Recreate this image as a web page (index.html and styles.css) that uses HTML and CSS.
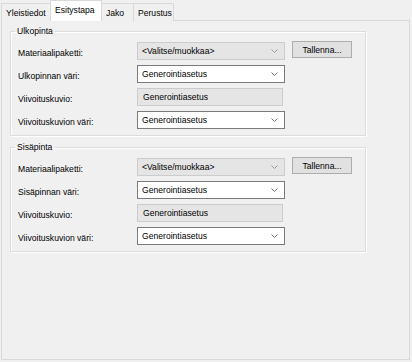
FILE: index.html
```html
<!DOCTYPE html>
<html>
<head>
<meta charset="utf-8">
<link rel="stylesheet" href="styles.css">
</head>
<body>
<div class="window">
  <div class="tabs">
    <div class="tab tab-yleis">Yleistiedot</div>
    <div class="tab tab-esitys selected">Esitystapa</div>
    <div class="tab tab-jako">Jako</div>
    <div class="tab tab-perus">Perustus</div>
  </div>
  <div class="panel">
    <fieldset class="group">
      <legend>Ulkopinta</legend>
      <div class="grid">
        <div class="label">Materiaalipaketti:</div>
        <div class="combo disabled"><span>&lt;Valitse/muokkaa&gt;</span><svg class="chev" width="7" height="4" viewBox="0 0 7 4"><polyline points="0.5,0.5 3.5,3.5 6.5,0.5" fill="none" stroke="#9a9a9a" stroke-width="1"/></svg></div>
        <button class="btn">Tallenna...</button>
        <div class="label">Ulkopinnan väri:</div>
        <div class="combo"><span>Generointiasetus</span><svg class="chev" width="7" height="4" viewBox="0 0 7 4"><polyline points="0.5,0.5 3.5,3.5 6.5,0.5" fill="none" stroke="#707070" stroke-width="1"/></svg></div>
        <div></div>
        <div class="label">Viivoituskuvio:</div>
        <div class="textbox"><span>Generointiasetus</span></div>
        <div></div>
        <div class="label">Viivoituskuvion väri:</div>
        <div class="combo"><span>Generointiasetus</span><svg class="chev" width="7" height="4" viewBox="0 0 7 4"><polyline points="0.5,0.5 3.5,3.5 6.5,0.5" fill="none" stroke="#707070" stroke-width="1"/></svg></div>
        <div></div>
      </div>
    </fieldset>
    <fieldset class="group">
      <legend>Sisäpinta</legend>
      <div class="grid">
        <div class="label">Materiaalipaketti:</div>
        <div class="combo disabled"><span>&lt;Valitse/muokkaa&gt;</span><svg class="chev" width="7" height="4" viewBox="0 0 7 4"><polyline points="0.5,0.5 3.5,3.5 6.5,0.5" fill="none" stroke="#9a9a9a" stroke-width="1"/></svg></div>
        <button class="btn">Tallenna...</button>
        <div class="label">Sisäpinnan väri:</div>
        <div class="combo"><span>Generointiasetus</span><svg class="chev" width="7" height="4" viewBox="0 0 7 4"><polyline points="0.5,0.5 3.5,3.5 6.5,0.5" fill="none" stroke="#707070" stroke-width="1"/></svg></div>
        <div></div>
        <div class="label">Viivoituskuvio:</div>
        <div class="textbox"><span>Generointiasetus</span></div>
        <div></div>
        <div class="label">Viivoituskuvion väri:</div>
        <div class="combo"><span>Generointiasetus</span><svg class="chev" width="7" height="4" viewBox="0 0 7 4"><polyline points="0.5,0.5 3.5,3.5 6.5,0.5" fill="none" stroke="#707070" stroke-width="1"/></svg></div>
        <div></div>
      </div>
    </fieldset>
  </div>
</div>
</body>
</html>
```

FILE: styles.css
```css
* { box-sizing: border-box; }
html, body {
  margin: 0;
  padding: 0;
  background: #f0f0f0;
}
body {
  width: 412px;
  height: 362px;
  font-family: "Liberation Sans", Arial, sans-serif;
  font-size: 8.6px;
  color: #000;
}
.window {
  padding-left: 1px;
  width: 411px;
}
.tabs {
  display: flex;
  align-items: flex-end;
  height: 21px;
  margin-bottom: -1px;
  position: relative;
  z-index: 1;
}
.tab {
  height: 18px;
  border: 1px solid #d9d9d9;
  border-bottom: none;
  margin-left: -1px;
  padding: 3px 0 0 4px;
  background: #f0f0f0;
  line-height: 12px;
}
.tab:first-child { margin-left: 0; }
.tab-yleis { width: 50px; }
.tab-esitys { width: 52px; }
.tab-jako { width: 33px; }
.tab-perus { width: 41px; }
.tab.selected {
  height: 21px;
  background: #ffffff;
  padding-top: 3px;
  position: relative;
  z-index: 2;
}
.panel {
  width: 409px;
  height: 340px;
  border: 1px solid #d9d9d9;
  background: #f0f0f0;
  padding: 4px 0 0 8px;
}
.group {
  width: 356px;
  margin: 0 0 5px 0;
  padding: 0 0 6px 0;
  border: 1px solid #dcdcdc;
  box-shadow: inset 1px 1px 0 #fff, 1px 1px 0 #fff;
  min-width: 0;
}
.group legend {
  margin-left: 4px;
  padding: 0 2px;
  line-height: 12px;
}
.grid {
  display: grid;
  grid-template-columns: 112px 148px 60px;
  column-gap: 7px;
  row-gap: 5px;
  padding: 5px 0 0 7px;
  align-items: start;
}
.label {
  height: 18px;
  padding-top: 5px;
  line-height: 12px;
  white-space: nowrap;
}
.combo, .textbox {
  height: 18px;
  display: flex;
  align-items: center;
  justify-content: space-between;
  padding: 0 6px 0 4px;
  border: 1px solid #7a7a7a;
  background: #fff;
  white-space: nowrap;
}
.combo.disabled {
  background: #e5e5e5;
  border-color: #cccccc;
}
.textbox {
  background: #e5e5e5;
  border-color: #cccccc;
  padding-left: 5px;
  margin-right: 2px;
}
.chev { display: block; }
.btn {
  height: 17px;
  margin-top: -1px;
  border: 1px solid #adadad;
  background: #e1e1e1;
  font: inherit;
  color: #000;
  padding: 0;
}
```
